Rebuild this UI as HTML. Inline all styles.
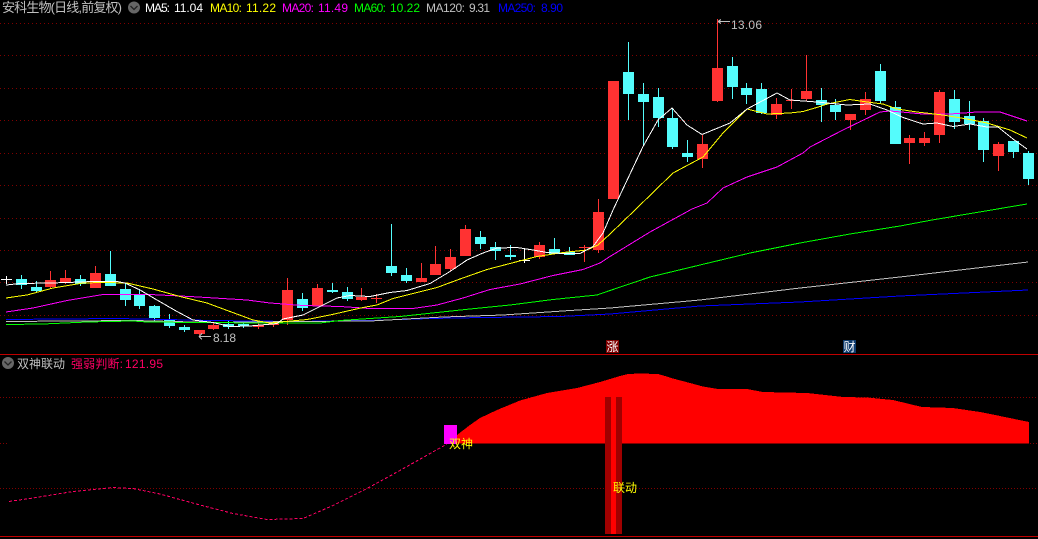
<!DOCTYPE html>
<html><head><meta charset="utf-8"><style>
html,body{margin:0;padding:0;background:#000;width:1038px;height:539px;overflow:hidden}
svg{display:block;position:absolute;left:0;top:0}
.g,.h{position:absolute;left:0;width:1038px;height:1px}
.g{background:repeating-linear-gradient(90deg,#800000 0 1px,transparent 1px 4px)}
.h{background:repeating-linear-gradient(90deg,#800000 0 1px,transparent 1px 3px)}
text{font-family:"Liberation Sans","WenQuanYi Zen Hei","Noto Sans CJK SC",sans-serif;font-size:12px}
.l{fill:none;stroke-width:1;shape-rendering:crispEdges}
.c{shape-rendering:crispEdges}
</style></head><body>
<div class="g" style="top:23px"></div>
<div class="g" style="top:55px"></div>
<div class="g" style="top:88px"></div>
<div class="g" style="top:120px"></div>
<div class="g" style="top:153px"></div>
<div class="g" style="top:185px"></div>
<div class="g" style="top:218px"></div>
<div class="g" style="top:250px"></div>
<div class="g" style="top:282px"></div>
<div class="g" style="top:315px"></div>
<div class="h" style="top:397px"></div>
<div class="h" style="top:488px"></div>
<div class="h" style="top:443px;width:7px"></div>
<div class="h" style="top:443px;left:1030px;width:8px"></div>
<svg width="1038" height="539" viewBox="0 0 1038 539" xmlns="http://www.w3.org/2000/svg">
<path class="c" fill="#c00000" d="M0 354h1038v1H0zM0 536h1038v1H0z"/>

<path class="c" fill="#ff3232" d="M50 271h1v18h-1zM45 280h11v7H45zM65 270h1v14h-1zM60 278h11v4H60zM95 266h1v22h-1zM90 273h11v15H90zM199 330h1v5h-1zM194 330h11v4h-11zM213 322h1v8h-1zM208 325h11v4h-11zM258 322h1v7h-1zM253 325h11v2h-11zM273 321h1v6h-1zM268 323h11v2h-11zM287 278h1v47h-1zM282 290h11v30h-11zM317 284h1v22h-1zM312 288h11v18h-11zM361 288h1v13h-1zM356 297h11v3h-11zM376 294h1v9h-1zM371 298h11v1h-11zM421 263h1v19h-1zM416 278h11v4h-11zM435 246h1v29h-1zM430 264h11v11h-11zM450 249h1v22h-1zM445 257h11v12h-11zM465 225h1v31h-1zM460 229h11v27h-11zM539 242h1v17h-1zM534 245h11v12h-11zM584 245h1v17h-1zM579 247h11v1h-11zM598 199h1v54h-1zM593 212h11v38h-11zM608 81h11v118h-11zM702 135h1v33h-1zM697 144h11v15h-11zM717 19h1v83h-1zM712 68h11v33h-11zM776 98h1v21h-1zM771 104h11v11h-11zM791 89h1v20h-1zM786 100h11v1h-11zM806 55h1v46h-1zM801 91h11v8h-11zM850 114h1v16h-1zM845 114h11v6h-11zM865 92h1v23h-1zM860 99h11v11h-11zM909 135h1v29h-1zM904 138h11v5h-11zM924 132h1v14h-1zM919 138h11v5h-11zM939 90h1v53h-1zM934 92h11v43h-11zM998 142h1v29h-1zM993 144h11v12h-11z"/>
<path class="c" fill="#54fcfc" d="M21 275h1v14h-1zM16 279h11v6H16zM36 281h1v12h-1zM31 287h11v4H31zM80 275h1v11h-1zM75 279h11v5H75zM110 251h1v35h-1zM105 274h11v12h-11zM125 283h1v23h-1zM120 289h11v11h-11zM139 289h1v20h-1zM134 295h11v11h-11zM154 305h1v16h-1zM149 306h11v12h-11zM169 314h1v14h-1zM164 320h11v6h-11zM184 325h1v7h-1zM179 327h11v3h-11zM228 320h1v9h-1zM223 324h11v3h-11zM243 322h1v6h-1zM238 324h11v2h-11zM302 293h1v18h-1zM297 299h11v9h-11zM332 283h1v10h-1zM327 290h11v2h-11zM347 287h1v14h-1zM342 292h11v7h-11zM391 224h1v52h-1zM386 266h11v7h-11zM406 268h1v15h-1zM401 275h11v6h-11zM480 231h1v18h-1zM475 237h11v7h-11zM495 242h1v18h-1zM490 247h11v4h-11zM510 245h1v15h-1zM505 255h11v2h-11zM554 238h1v16h-1zM549 249h11v5h-11zM569 247h1v8h-1zM564 252h11v3h-11zM628 42h1v78h-1zM623 72h11v22h-11zM643 83h1v63h-1zM638 94h11v8h-11zM658 88h1v39h-1zM653 97h11v21h-11zM672 108h1v41h-1zM667 118h11v29h-11zM687 140h1v22h-1zM682 153h11v4h-11zM732 57h1v42h-1zM727 66h11v21h-11zM746 83h1v21h-1zM741 88h11v7h-11zM761 83h1v31h-1zM756 89h11v24h-11zM821 88h1v34h-1zM816 100h11v5h-11zM835 99h1v21h-1zM830 105h11v7h-11zM880 64h1v39h-1zM875 71h11v30h-11zM895 101h1v43h-1zM890 107h11v37h-11zM954 90h1v39h-1zM949 99h11v23h-11zM969 101h1v29h-1zM964 116h11v8h-11zM983 118h1v44h-1zM978 121h11v29h-11zM1013 141h1v17h-1zM1008 141h11v11h-11zM1028 151h1v34h-1zM1023 153h11v26h-11z"/>
<path class="c" fill="#fff" d="M6 276h1v8H6zM1 279h11v1H1zM524 248h1v15h-1zM519 260h11v1h-11z"/>

<polyline class="l" stroke="#0000ff" points="6,319.5 117,318.5 213,320.5 293,321.5 370,320.5 430,318.5 483,317.5 560,316.5 610,314 700,306 800,302 900,296 1028,290"/>
<polyline class="l" stroke="#c0c0c0" points="6,321.5 133,320.5 213,322.5 293,321.5 370,321 443,317 503,315 570,310.5 610,308 700,300 800,288 900,277 1028,262"/>
<polyline class="l" stroke="#00ff00" points="6,324.5 43,324 87,322 133,321 147,322 200,322.5 267,323 320,323 340,320.5 370,318.5 400,316.5 437,312.5 470,309 510,305 553,299.5 597,295 610,290.5 650,277 700,265 750,253 800,243 850,234 900,226 932,220 1027,204"/>
<polyline class="l" stroke="#ff00ff" points="6,312 33,308 67,300.5 103,294.5 150,294.5 190,296.5 247,300 270,303 303,305.5 340,306.5 370,308.5 413,308.5 437,305 463,298 490,289.5 520,284 553,275.5 583,269.5 600,263 610,256.5 650,232 692,209 707,203 723,188 747,177 777,167 803,153 810,147 843,130 880,112 890,111 923,114 950,114 977,112 1000,112 1027,121"/>
<polyline class="l" stroke="#ffff00" points="6,298 27,295 53,288 83,283 103,282.5 127,283 153,289 180,296.5 207,303 230,311.5 253,320 270,323 307,319.5 330,315 363,307.5 377,305 393,298.5 413,293.5 437,287.5 460,279 487,269.5 510,263.5 537,256.5 563,252.5 587,250 598,245 610,234 635,210 673,173 703,157 723,133 747,109 767,114 790,113 803,111.5 820,106.5 827,104 850,99.5 867,102 883,104 897,109 917,112 943,115 967,119 987,123 1010,130 1027,138"/>
<polyline class="l" stroke="#ffffff" points="6,285 20,283.5 50,283 67,282.5 93,281.5 117,281.5 125,283 140,290 157,300 177,311.5 193,320 213,322.5 230,326.5 250,326 277,323.5 283,319 303,315 320,306.5 337,298 350,295.5 370,296.5 390,292.5 407,290.5 430,283.5 450,271.5 467,260 483,253 497,248 517,247.5 533,250 547,252.5 563,253.5 580,253.5 593,246.5 603,233 610,217 613,210 643,146.5 658,120 672,108 687,125 702,134.5 730,123 747,109 777,93 790,100 817,102 827,103 847,105 870,104 887,110 903,117.5 923,124 937,123 953,126.5 970,124 987,127 998,127 1013,139 1027,149"/>

<polygon class="c" fill="#ff0000" points="457,443.5 457,435 470,425 480,418 497,410 520,400.5 547,393 577,388 600,382 610,379 620,376 628,374 640,373.5 658,374 665,376 673,378.5 690,383 703,386.5 718,389 747,389 763,392 807,393 843,397 867,397.5 893,400 922,407 953,408 980,412 1000,416 1029,422 1029,443.5"/>
<polyline fill="none" stroke="#ff0064" stroke-dasharray="3 2" class="c" points="9,501.5 33,498 73,491.5 113,487.5 133,488.5 160,494 200,505 233,513.5 267,519.5 303,518.5 333,505.5 367,488.5 399,471 447,444"/>
<rect class="c" x="444" y="425" width="13" height="19" fill="#ff00ff"/>
<path class="c" fill="#a00000" d="M605 397h6v137h-6zM616 397h6v137h-6z"/>
<rect class="c" x="611" y="397" width="5" height="137" fill="#ff0000"/>

<rect class="c" x="606" y="340" width="13" height="13" fill="#800000"/>
<rect class="c" x="843" y="340" width="13" height="13" fill="#0f3c6e"/>
<text x="606.500" y="351" fill="#fff">涨</text>
<text x="843.500" y="351" fill="#fff">财</text>

<text x="2" y="12" fill="#c0c0c0" style="font-size:13px" textLength="120" lengthAdjust="spacing">安科生物(日线,前复权)</text>
<circle cx="134" cy="7.500" r="6" fill="#666"/>
<path d="M130.500 6l3.500 3.500 3.500-3.500" fill="none" stroke="#222" stroke-width="1.300"/>
<text x="145" y="12" fill="#fff" textLength="25" lengthAdjust="spacing">MA5:</text>
<text x="174" y="12" fill="#fff" textLength="29" lengthAdjust="spacing">11.04</text>
<text x="210" y="12" fill="#ffff00" textLength="32" lengthAdjust="spacing">MA10:</text>
<text x="246" y="12" fill="#ffff00" textLength="30" lengthAdjust="spacing">11.22</text>
<text x="282" y="12" fill="#ff00ff" textLength="32" lengthAdjust="spacing">MA20:</text>
<text x="318" y="12" fill="#ff00ff" textLength="30" lengthAdjust="spacing">11.49</text>
<text x="354" y="12" fill="#00ff00" textLength="32" lengthAdjust="spacing">MA60:</text>
<text x="390" y="12" fill="#00ff00" textLength="30" lengthAdjust="spacing">10.22</text>
<text x="426" y="12" fill="#c0c0c0" textLength="39" lengthAdjust="spacing">MA120:</text>
<text x="469" y="12" fill="#c0c0c0" textLength="21" lengthAdjust="spacing">9.31</text>
<text x="498" y="12" fill="#0000ff" textLength="38" lengthAdjust="spacing">MA250:</text>
<text x="541" y="12" fill="#0000ff" textLength="22" lengthAdjust="spacing">8.90</text>

<text x="731" y="29" fill="#c0c0c0" textLength="31" lengthAdjust="spacing">13.06</text>
<path class="c" fill="none" stroke="#c0c0c0" d="M718 21.500h12M718 21.500l3-2M718 21.500l3 2"/>
<text x="213" y="342" fill="#c0c0c0" textLength="23" lengthAdjust="spacing">8.18</text>
<path class="c" fill="none" stroke="#c0c0c0" d="M199 336.500h12M199 336.500l3-3M199 336.500l3 3"/>

<circle cx="8" cy="363" r="6" fill="#666"/>
<path d="M4.500 361.500l3.500 3.500 3.500-3.500" fill="none" stroke="#222" stroke-width="1.300"/>
<text x="17" y="368" fill="#c0c0c0" textLength="48" lengthAdjust="spacing">双神联动</text>
<text x="71" y="368" fill="#ff0064" textLength="52" lengthAdjust="spacing">强弱判断:</text>
<text x="125" y="368" fill="#ff0064" textLength="38" lengthAdjust="spacing">121.95</text>

<text x="449" y="448" fill="#ffff00">双神</text>
<text x="613" y="492" fill="#ffff00">联动</text>
</svg>
</body></html>
